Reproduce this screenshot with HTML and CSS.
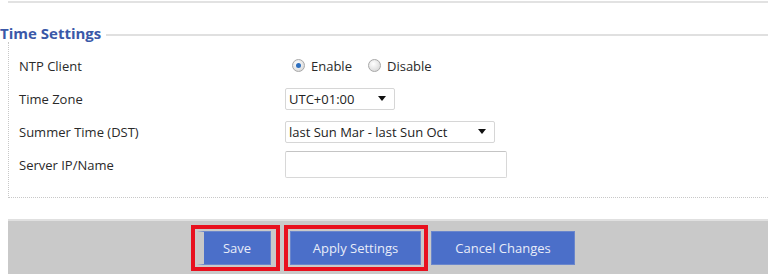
FILE: index.html
```html
<!DOCTYPE html>
<html lang="en">
<head>
    <meta charset="UTF-8">
    <title>Time Settings</title>
    <link rel="stylesheet" href="styles.css">
</head>
<body>

    <div class="prev-panel"></div>

    <div class="section-title">
        <span class="title-text">Time Settings</span>
        <span class="title-line"></span>
    </div>

    <div class="panel">
        <div class="row">
            <span class="label">NTP Client</span>
            <div class="control radios">
                <span class="radio checked"></span><span class="radio-label">Enable</span>
                <span class="radio"></span><span class="radio-label">Disable</span>
            </div>
        </div>
        <div class="row">
            <span class="label">Time Zone</span>
            <div class="control">
                <div class="select tz">
                    <span>UTC+01:00</span>
                    <svg class="arrow" width="8" height="5" viewBox="0 0 8 5"><path d="M0 0h8L4 5z" fill="#111"/></svg>
                </div>
            </div>
        </div>
        <div class="row">
            <span class="label">Summer Time (DST)</span>
            <div class="control">
                <div class="select dst">
                    <span>last Sun Mar - last Sun Oct</span>
                    <svg class="arrow" width="8" height="5" viewBox="0 0 8 5"><path d="M0 0h8L4 5z" fill="#111"/></svg>
                </div>
            </div>
        </div>
        <div class="row">
            <span class="label">Server IP/Name</span>
            <div class="control">
                <div class="text-input"></div>
            </div>
        </div>
    </div>

    <div class="actions">
        <div class="mark first">
            <button class="button save">Save</button>
        </div>
        <div class="mark">
            <button class="button apply">Apply Settings</button>
        </div>
        <button class="button cancel">Cancel Changes</button>
    </div>

</body>
</html>
```

FILE: styles.css
```css
body {
    margin: 0;
    font-family: "Open Sans", "DejaVu Sans", sans-serif;
    font-size: 13px;
    color: #2a2a2a;
    background: #fff;
}

.prev-panel {
    margin-left: 8px;
    height: 1px;
    border-bottom: 2px solid #e2e2e2;
}

.section-title {
    display: flex;
    align-items: center;
    margin-top: 21px;
    height: 18px;
}

.title-text {
    font-size: 15px;
    font-weight: bold;
    color: #3a58a8;
}

.title-line {
    flex: 1;
    margin-left: 5px;
    margin-top: 3px;
    border-top: 2px solid #e0e0e0;
}

.panel {
    margin-left: 8px;
    border-left: 1px dotted #c8c8c8;
    border-bottom: 1px dotted #c8c8c8;
    padding: 7px 0 16px 10px;
}

.row {
    display: flex;
    align-items: center;
    height: 33px;
}

.label {
    width: 266px;
}

.control {
    display: flex;
    align-items: center;
}

.radios {
    padding-left: 7px;
}

.radio {
    width: 11px;
    height: 11px;
    border-radius: 50%;
    border: 1px solid #a8a8a8;
    background: radial-gradient(circle at 40% 35%, #fff, #d0d0d0);
    position: relative;
}

.radio.checked::after {
    content: "";
    position: absolute;
    left: 3px;
    top: 3px;
    width: 5px;
    height: 5px;
    border-radius: 50%;
    background: #2d6fbf;
}

.radio-label {
    margin-left: 6px;
    margin-right: 16px;
}

.select {
    display: flex;
    align-items: center;
    justify-content: space-between;
    height: 22px;
    padding: 0 8px 0 3px;
    border: 1px solid #d6d6d6;
    border-radius: 2px;
    box-sizing: border-box;
    color: #222;
}

.tz {
    width: 110px;
}

.dst {
    width: 210px;
}

.text-input {
    width: 222px;
    height: 27px;
    box-sizing: border-box;
    border: 1px solid #d8d8d8;
    border-top-color: #c4c4c4;
    border-radius: 2px;
}

.actions {
    display: flex;
    align-items: flex-start;
    margin: 21px 0 0 8px;
    height: 55px;
    padding-left: 183px;
    background: #c9c9c9;
    border-top: 2px solid #e0e0e0;
    box-sizing: border-box;
}

.mark {
    margin-top: 4px;
    margin-right: 3px;
    border: 4px solid #e8101e;
    padding: 2px 3px 2px 2px;
    display: flex;
}

.mark.first {
    margin-right: 4px;
    padding-right: 5px;
}

.button {
    font-family: "Open Sans", "DejaVu Sans", sans-serif;
    font-size: 13px;
    color: #e8ecf8;
    background: #4b6fc9;
    border: 1px solid #6a86cc;
    height: 34px;
    padding: 0;
    cursor: pointer;
}

.save {
    width: 74px;
    border-left: 7px solid #c8c8c8;
}

.apply {
    width: 131px;
}

.cancel {
    width: 144px;
    margin-top: 10px;
}
```
